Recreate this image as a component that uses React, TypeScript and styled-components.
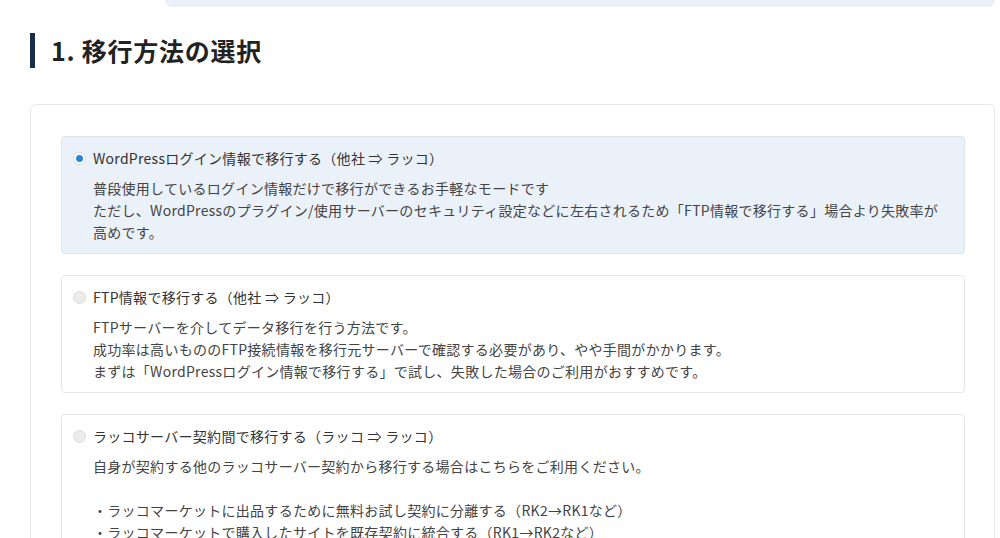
import React, { useState } from 'react'
import styled, { createGlobalStyle } from 'styled-components'

const GlobalStyle = createGlobalStyle`
  html, body {
    margin: 0;
    padding: 0;
    background: #fff;
    overflow: hidden;
  }
  body {
    font-family: "Noto Sans CJK JP", "Noto Sans", sans-serif;
    color: #333;
  }
`

const Page = styled.div`
  padding: 0 5px 0 30px;
`

const TopStrip = styled.div`
  margin-left: 135px;
  height: 7px;
  background: #e9f0f8;
  border-radius: 0 0 7px 7px;
`

const Heading = styled.h2`
  margin: 26px 0 0;
  padding-left: 16px;
  border-left: 5px solid #1b2d4f;
  font-size: 25px;
  line-height: 35px;
  font-weight: 700;
  color: #222;
  letter-spacing: 0.03em;
`

const Card = styled.div`
  margin-top: 36px;
  border: 1px solid #e6e8eb;
  border-radius: 6px;
  padding: 31px 29px 40px 30px;
`

const Option = styled.label<{ $active: boolean }>`
  display: block;
  margin-bottom: 21px;
  padding: 10px 12px 10px 11px;
  border: 1px solid ${({ $active }) => ($active ? '#dbe4ee' : '#e3e5e8')};
  border-radius: 4px;
  background: ${({ $active }) => ($active ? '#eaf1f9' : '#fff')};
  cursor: pointer;
`

const OptionHead = styled.div`
  display: flex;
  align-items: center;
  gap: 7px;
  font-size: 14px;
  line-height: 22px;
  color: #333;
  letter-spacing: 0.02em;
`

const Radio = styled.span<{ $checked: boolean }>`
  width: 13px;
  height: 13px;
  box-sizing: border-box;
  border-radius: 50%;
  border: 1px solid ${({ $checked }) => ($checked ? '#d8dde3' : '#dcdcdc')};
  background: ${({ $checked }) => ($checked ? '#fff' : '#ececec')};
  display: flex;
  align-items: center;
  justify-content: center;
  flex-shrink: 0;

  &::after {
    content: '';
    width: 7px;
    height: 7px;
    border-radius: 50%;
    background: #2a86d8;
    display: ${({ $checked }) => ($checked ? 'block' : 'none')};
  }
`

const Desc = styled.div`
  margin-top: 8px;
  padding-left: 20px;
  font-size: 14px;
  line-height: 22px;
  color: #444;
  letter-spacing: 0.02em;
`

const Line = styled.div`
  min-height: 22px;
`

const options = [
  {
    title: 'WordPressログイン情報で移行する（他社 ⇒ ラッコ）',
    lines: [
      '普段使用しているログイン情報だけで移行ができるお手軽なモードです',
      'ただし、WordPressのプラグイン/使用サーバーのセキュリティ設定などに左右されるため「FTP情報で移行する」場合より失敗率が高めです。',
    ],
  },
  {
    title: 'FTP情報で移行する（他社 ⇒ ラッコ）',
    lines: [
      'FTPサーバーを介してデータ移行を行う方法です。',
      '成功率は高いもののFTP接続情報を移行元サーバーで確認する必要があり、やや手間がかかります。',
      'まずは「WordPressログイン情報で移行する」で試し、失敗した場合のご利用がおすすめです。',
    ],
  },
  {
    title: 'ラッコサーバー契約間で移行する（ラッコ ⇒ ラッコ）',
    lines: [
      '自身が契約する他のラッコサーバー契約から移行する場合はこちらをご利用ください。',
      '',
      '・ラッコマーケットに出品するために無料お試し契約に分離する（RK2→RK1など）',
      '・ラッコマーケットで購入したサイトを既存契約に統合する（RK1→RK2など）',
    ],
  },
]

const App = () => {
  const [selected, setSelected] = useState(0)

  return (
    <Page>
      <GlobalStyle />
      <TopStrip />
      <Heading>1. 移行方法の選択</Heading>
      <Card>
        {options.map((opt, i) => (
          <Option key={opt.title} $active={selected === i} onClick={() => setSelected(i)}>
            <OptionHead>
              <Radio $checked={selected === i} />
              {opt.title}
            </OptionHead>
            <Desc>
              {opt.lines.map((line, j) => (
                <Line key={j}>{line}</Line>
              ))}
            </Desc>
          </Option>
        ))}
      </Card>
    </Page>
  )
}

export default App
